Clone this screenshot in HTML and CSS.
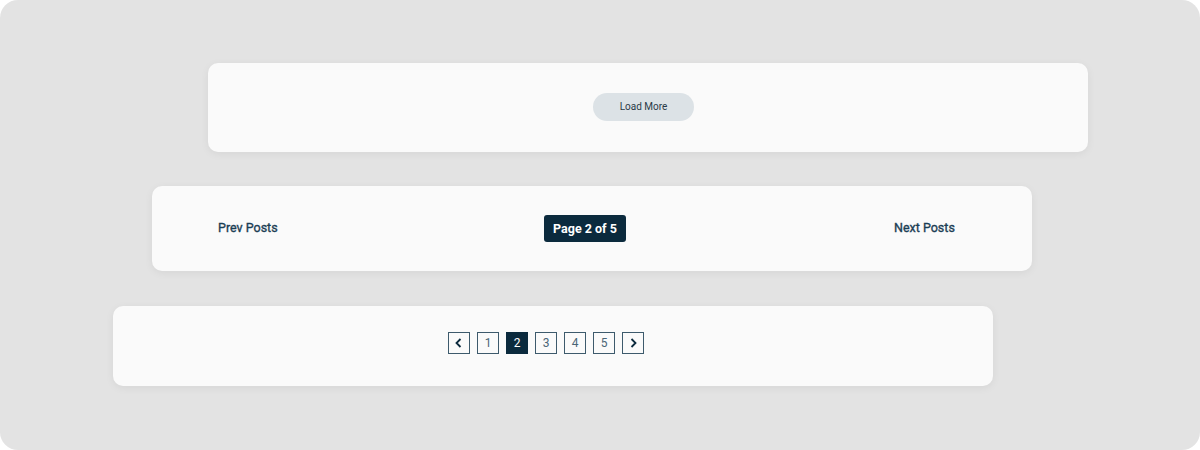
FILE: index.html
```html
<!DOCTYPE html>
<html>
<head>
<meta charset="utf-8">
<link rel="stylesheet" href="styles.css">
</head>
<body>
<div class="frame">
  <div class="card card-load">
    <button class="load-more">Load More</button>
  </div>
  <div class="card card-posts">
    <a class="posts-link">Prev Posts</a>
    <span class="page-badge">Page 2 of 5</span>
    <a class="posts-link">Next Posts</a>
  </div>
  <div class="card card-pages">
    <div class="pager">
      <span class="pg pg-arrow"><svg width="12" height="12" viewBox="0 0 12 12"><path d="M7.5 2 L3.5 6 L7.5 10" fill="none" stroke="#0b2a3d" stroke-width="1.8"/></svg></span>
      <span class="pg">1</span>
      <span class="pg pg-active">2</span>
      <span class="pg">3</span>
      <span class="pg">4</span>
      <span class="pg">5</span>
      <span class="pg pg-arrow"><svg width="12" height="12" viewBox="0 0 12 12"><path d="M4.5 2 L8.5 6 L4.5 10" fill="none" stroke="#0b2a3d" stroke-width="1.8"/></svg></span>
    </div>
  </div>
</div>
</body>
</html>
```

FILE: styles.css
```css
html, body {
  margin: 0;
  padding: 0;
  background: #ffffff;
}
body {
  font-family: Roboto, "Liberation Sans", sans-serif;
}
.frame {
  width: 1200px;
  height: 450px;
  box-sizing: border-box;
  background: #e3e3e3;
  border-radius: 18px;
  padding-top: 63px;
  display: flex;
  flex-direction: column;
  align-items: flex-start;
}
.card {
  width: 880px;
  background: #fafafa;
  border-radius: 10px;
  box-shadow: 0 2px 8px rgba(0,0,0,0.06);
  box-sizing: border-box;
  display: flex;
  align-items: center;
}
.card-load {
  margin-left: 208px;
  height: 89px;
  justify-content: center;
  padding-right: 9px;
  padding-bottom: 2px;
}
.load-more {
  width: 101px;
  height: 28px;
  border: none;
  border-radius: 14px;
  background: #dce2e6;
  color: #2a3a46;
  font-family: Roboto, "Liberation Sans", sans-serif;
  font-size: 10px;
  padding: 0;
}
.card-posts {
  margin-left: 152px;
  margin-top: 34px;
  height: 85px;
  padding: 0 78px 0 66px;
  justify-content: space-between;
}
.posts-link {
  color: #1a3d54;
  font-size: 12.5px;
  font-weight: 400;
  width: 60px;
  white-space: nowrap;
  -webkit-text-stroke: 0.35px #1a3d54;
  padding-bottom: 2px;
}
.page-badge {
  background: #0b2a3d;
  color: #ffffff;
  font-size: 12.5px;
  font-weight: 700;
  height: 27px;
  line-height: 27px;
  padding: 0 9px;
  border-radius: 3px;
  margin-right: 2px;
}
.card-pages {
  margin-left: 113px;
  margin-top: 35px;
  height: 80px;
  justify-content: center;
  padding-right: 14px;
  padding-bottom: 6px;
}
.pager {
  display: flex;
  gap: 7px;
}
.pg {
  width: 22px;
  height: 22px;
  box-sizing: border-box;
  border: 1px solid #3d5a6c;
  color: #4a6576;
  font-size: 12px;
  display: flex;
  align-items: center;
  justify-content: center;
}
.pg-active {
  background: #0b2a3d;
  border-color: #0b2a3d;
  color: #ffffff;
}
```
